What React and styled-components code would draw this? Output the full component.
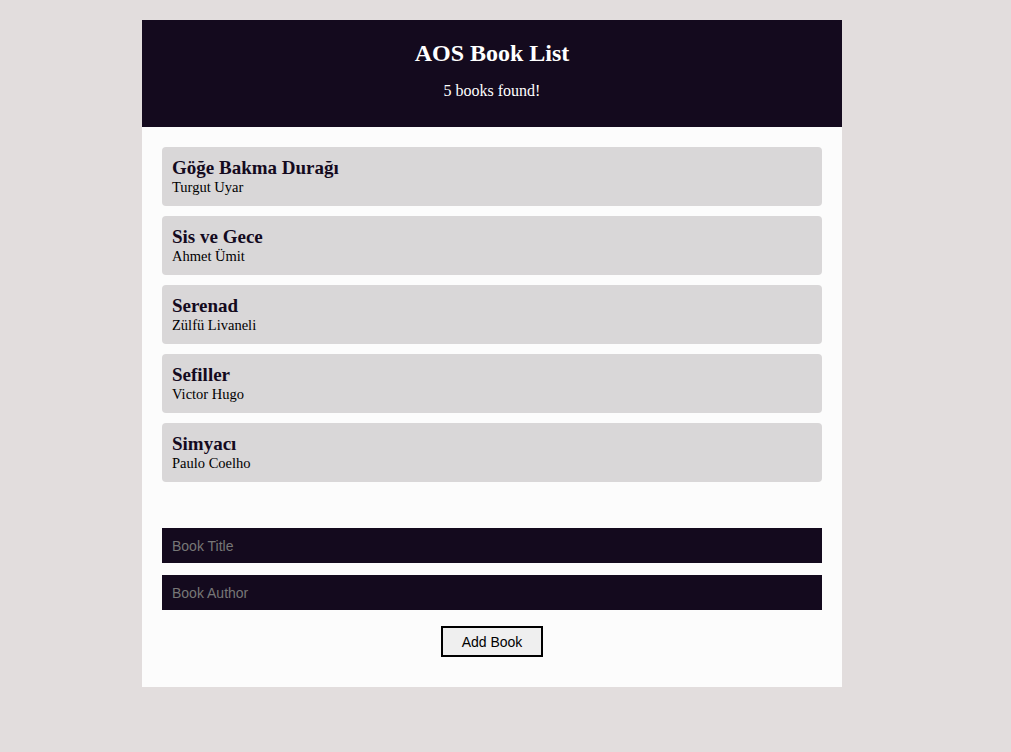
import React from "react";
import styled, { createGlobalStyle } from "styled-components";

const books = [
  { title: "Göğe Bakma Durağı", author: "Turgut Uyar" },
  { title: "Sis ve Gece", author: "Ahmet Ümit" },
  { title: "Serenad", author: "Zülfü Livaneli" },
  { title: "Sefiller", author: "Victor Hugo" },
  { title: "Simyacı", author: "Paulo Coelho" },
];

export default function App() {
  return (
    <>
      <GlobalStyle />
      <Wrapper>
        <Navbar>
          <h1>AOS Book List</h1>
          <p>{books.length} books found!</p>
        </Navbar>
        <Content>
          <List>
            {books.map((b) => (
              <Item key={b.title}>
                <Title>{b.title}</Title>
                <Author>{b.author}</Author>
              </Item>
            ))}
          </List>
          <Form onSubmit={(e) => e.preventDefault()}>
            <Input type="text" placeholder="Book Title" />
            <Input type="text" placeholder="Book Author" />
            <Button type="submit">Add Book</Button>
          </Form>
        </Content>
      </Wrapper>
    </>
  );
}

// the original page sits a little left of centre
const GlobalStyle = createGlobalStyle`
  body {
    margin: 0 27px 0 0;
    padding: 20px 0;
    background: #e2dddd;
    font-family: "Liberation Serif", "Times New Roman", serif;
  }
`;
const Wrapper = styled.div`
  width: 700px;
  margin: 0 auto;
  background: #fcfcfc;
`;
const Navbar = styled.div`
  background: #140a1e;
  color: #fff;
  text-align: center;
  padding: 19px 20px 27px;
  h1 {
    margin: 0;
    font-size: 24px;
    line-height: 28px;
  }
  p {
    margin: 15px 0 0;
    font-size: 16px;
    line-height: 18px;
  }
`;
const Content = styled.div`
  padding: 20px 20px 30px;
`;
const List = styled.ul`
  list-style: none;
  margin: 0;
  padding: 0;
  display: flex;
  flex-direction: column;
  gap: 10px;
`;
const Item = styled.li`
  background: #d9d7d8;
  border-radius: 4px;
  padding: 10px;
  color: #140a1e;
`;
const Title = styled.div`
  font-weight: bold;
  font-size: 19px;
  line-height: 22px;
`;
const Author = styled.div`
  font-size: 14.5px;
  line-height: 17px;
  color: #000;
`;
const Form = styled.form`
  margin-top: 46px;
  display: flex;
  flex-direction: column;
  gap: 12px;
`;
const Input = styled.input`
  box-sizing: border-box;
  width: 100%;
  height: 35px;
  border: 0;
  background: #140a1e;
  color: #fff;
  padding: 0 10px;
  font-family: "Liberation Sans", Arial, sans-serif;
  font-size: 14px;
  outline: none;
  &::placeholder {
    color: #777;
  }
`;
const Button = styled.button`
  align-self: center;
  margin-top: 4px;
  width: 102px;
  height: 31px;
  background: #efefef;
  border: 2px solid #000;
  font-family: "Liberation Sans", Arial, sans-serif;
  font-size: 14px;
  color: #000;
`;
